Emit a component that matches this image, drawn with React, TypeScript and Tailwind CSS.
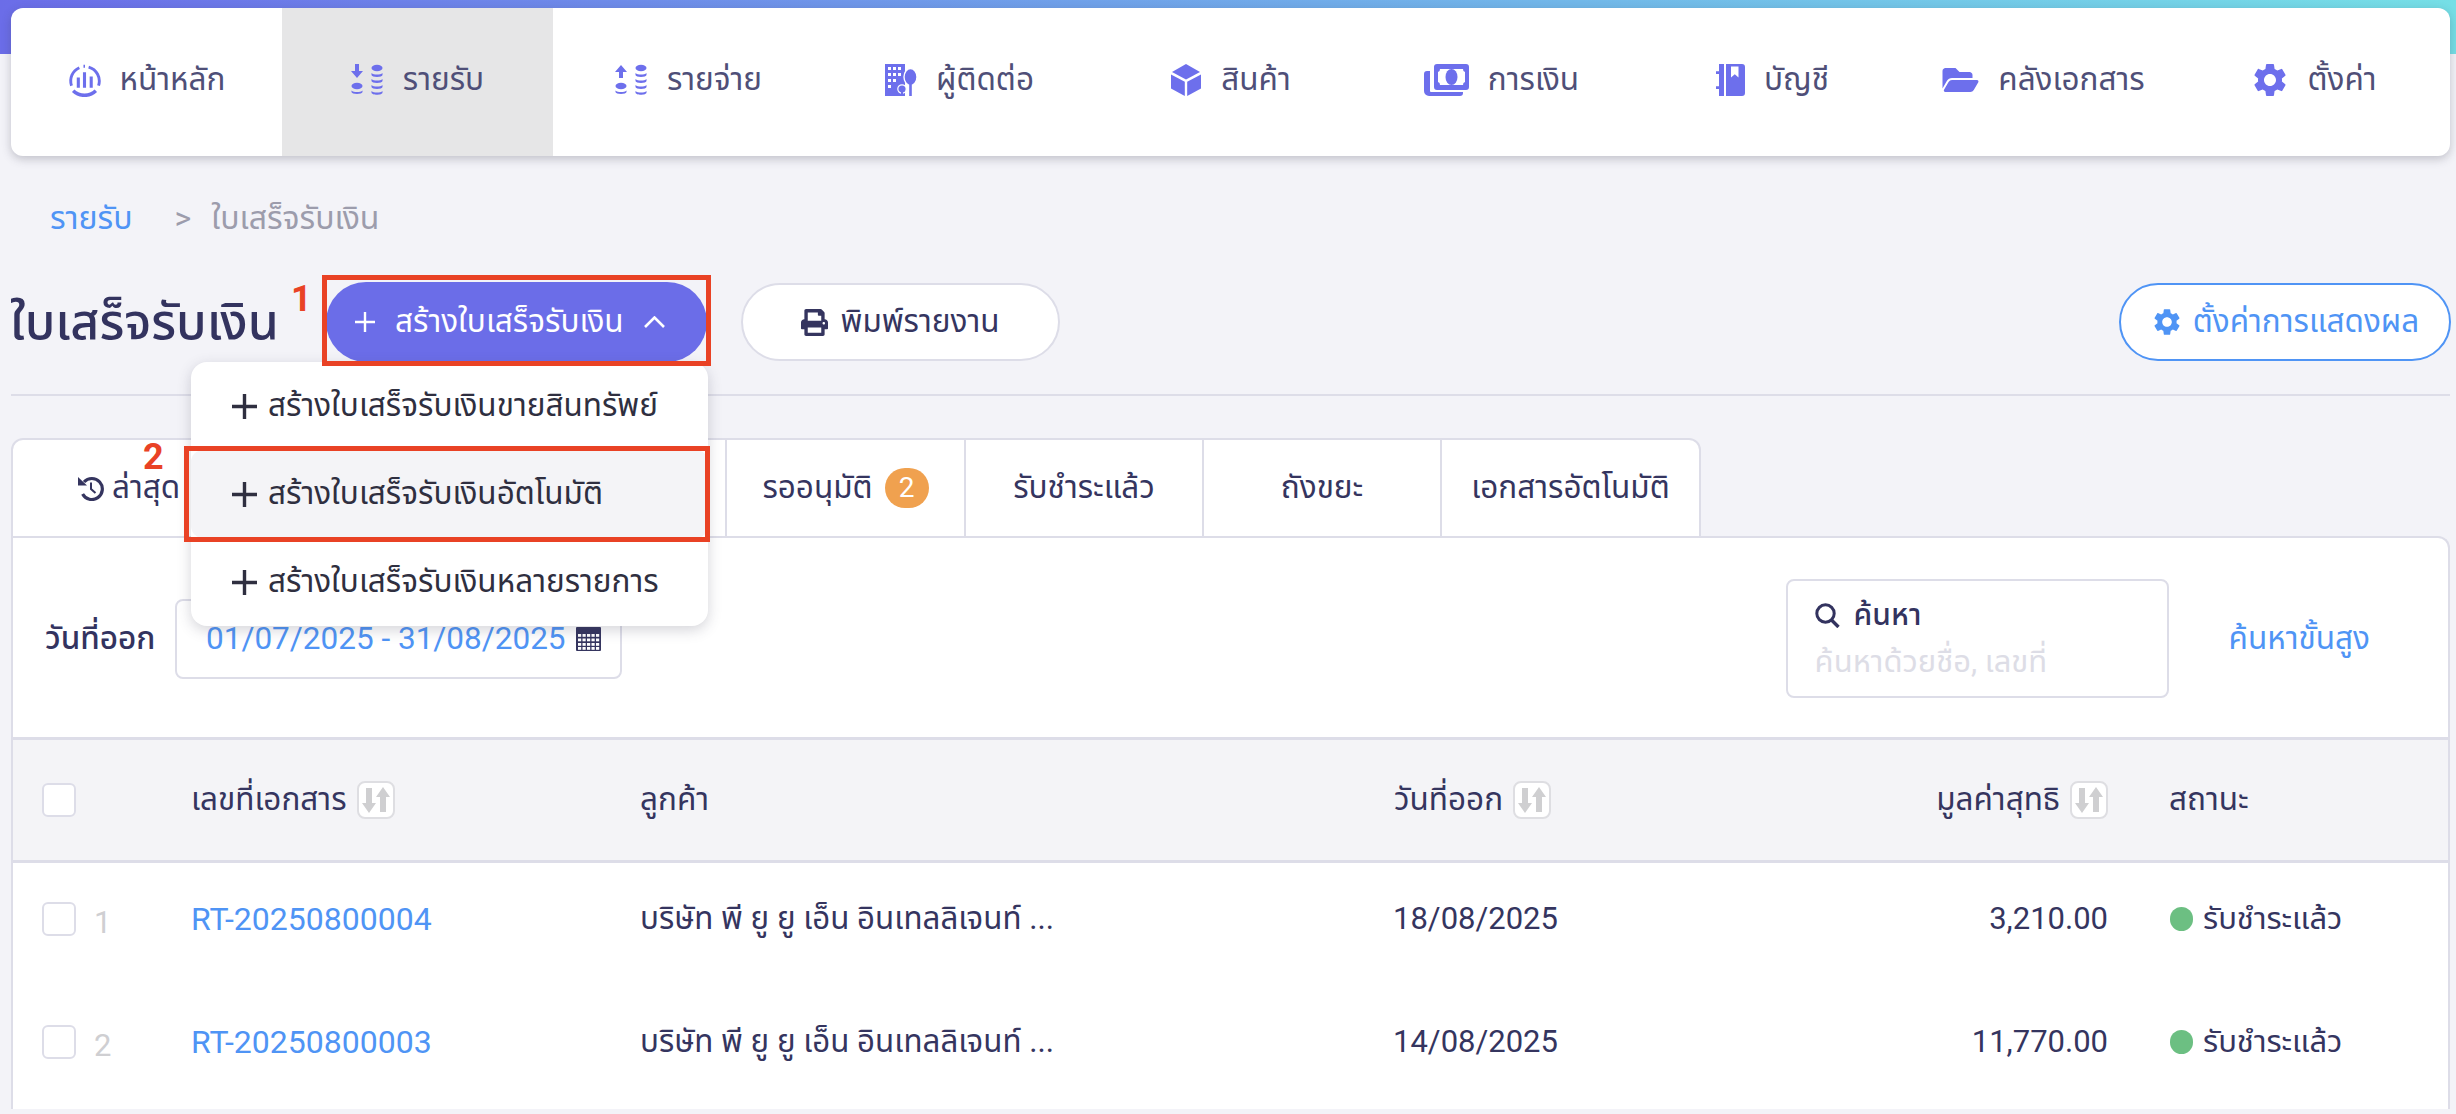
import React from 'react';
import { FaFolderOpen, FaPrint } from 'react-icons/fa';
import { MdSettings } from 'react-icons/md';

const IconHome = () => (
  <svg viewBox="0 0 32 32" className="w-[33px] h-[33px]" fill="none" stroke="#6d6fec">
    <path d="M3.4 21A14 14 0 0 1 11 3.6" strokeWidth="2.8" />
    <path d="M15 2.2h1.5M20 3A14 14 0 0 1 29.6 21" strokeWidth="2.8" />
    <path d="M5 26a16 16 0 0 0 22 0" strokeWidth="3.4" />
    <path d="M10 13v10M16 8v15M22.5 12v11" strokeWidth="3" />
  </svg>
);

const IconCoins = ({ up }: { up?: boolean }) => (
  <svg viewBox="0 0 33 32" className="w-[33px] h-8" fill="#6d6fec">
    {up ? <path d="M6 1l6 7H8v6H4V8H0z" /> : <path d="M4 0h4v7h4l-6 7-6-7h4z" />}
    <ellipse cx="6" cy="22" rx="5.5" ry="3.2" />
    <path d="M.5 26.5c2 2 9 2 11 0v1.5c0 2.5-11 2.5-11 0z" />
    <ellipse cx="26" cy="4" rx="5.5" ry="3.2" />
    <path d="M20.5 9c2 2 9 2 11 0v2c0 2.5-11 2.5-11 0zM20.5 15c2 2 9 2 11 0v2c0 2.5-11 2.5-11 0zM20.5 21c2 2 9 2 11 0v2c0 2.5-11 2.5-11 0zM20.5 27c2 2 9 2 11 0v1.5c0 3-11 3-11 0z" />
  </svg>
);

const IconContact = () => (
  <svg viewBox="0 0 32 32" className="w-8 h-8" fill="#6d6fec">
    <path fillRule="evenodd" d="M0 0h20v32H0zM3 3v3h3V3zm5 0v3h3V3zm5 0v3h3V3zM3 9v3h3V9zm5 0v3h3V9zm5 0v3h3V9zM3 15v3h3v-3zm5 0v3h3v-3zM3 21v3h3v-3z" />
    <ellipse cx="25.5" cy="13" rx="6.5" ry="8.5" stroke="#fff" strokeWidth="1.4" />
    <rect x="24.2" y="18" width="2.6" height="14" />
    <circle cx="17" cy="25" r="4.2" stroke="#fff" strokeWidth="1.2" />
    <rect x="16" y="26" width="2" height="6" />
  </svg>
);

const IconCube = () => (
  <svg viewBox="0 0 32 32" className="w-8 h-8" fill="#6d6fec">
    <path d="M16 0l14 8-14 7.6L2 8z" />
    <path d="M1 10.4l13.8 7.4V32L1 24.5z" />
    <path d="M31 10.4l-13.8 7.4V32L31 24.5z" />
  </svg>
);

const IconMoney = () => (
  <svg viewBox="0 0 45 32" className="w-[45px] h-8" fill="#6d6fec">
    <path fillRule="evenodd" d="M13 0h29a3 3 0 0 1 3 3v20a3 3 0 0 1-3 3H13a3 3 0 0 1-3-3V3a3 3 0 0 1 3-3zm3 5a3 3 0 0 1-2 3v10a3 3 0 0 1 2 3h23a3 3 0 0 1 2-3V8a3 3 0 0 1-2-3z" />
    <ellipse cx="27.5" cy="13" rx="6" ry="8" />
    <path d="M0 10a3 3 0 0 1 3-3h3v20a1 1 0 0 0 1 1h32v1a3 3 0 0 1-3 3H5a5 5 0 0 1-5-5z" />
  </svg>
);

const IconBook = () => (
  <svg viewBox="0 0 29 32" className="w-[29px] h-8" fill="#6d6fec">
    <path fillRule="evenodd" d="M10 0h16a3 3 0 0 1 3 3v26a3 3 0 0 1-3 3H10zm5 2.5v11l3.8-3.2 3.7 3.2v-11z" />
    <path d="M3 0h5v32H3V25H0v-2.8h3V10H0V7.2h3z" />
  </svg>
);

const IconHistory = () => (
  <svg viewBox="0 0 26 26" className="w-[26px] h-[26px] text-[#35355f]" fill="none" stroke="currentColor">
    <path d="M6 7A10.5 10.5 0 1 1 4.6 19" strokeWidth="3.2" />
    <path d="M0 2l9 8.5H0z" fill="currentColor" stroke="none" />
    <path d="M13 7.5V14l4.5 4" strokeWidth="2" />
  </svg>
);

const IconSearch = () => (
  <svg viewBox="0 0 25 25" className="w-[25px] h-[25px]" fill="none" stroke="currentColor">
    <circle cx="10.5" cy="10.5" r="8.7" strokeWidth="3" />
    <path d="M16.5 17l7 7" strokeWidth="3.4" />
  </svg>
);

const IconCalendar = () => (
  <svg viewBox="0 0 25 24" className="w-[25px] h-6 fill-[#35355f]">
    <path d="M1 0h23a1 1 0 0 1 1 1v22a1 1 0 0 1-1 1H1a1 1 0 0 1-1-1V1a1 1 0 0 1 1-1z" />
    {[7, 11.5, 16, 20].flatMap(y =>
      [2, 6.5, 11, 15.5, 20].map(x => <rect key={`${x}-${y}`} x={x} y={y} width="3.2" height="2.8" fill="#fff" />),
    )}
  </svg>
);

const PlusMark = ({ size, stroke }: { size: string; stroke: number }) => (
  <svg viewBox="0 0 25 25" className={size} fill="none" stroke="currentColor" strokeWidth={stroke}>
    <path d="M12.5 0v25M0 12.5h25" />
  </svg>
);

const SortIcon = () => (
  <span className="inline-flex items-center justify-center w-[38px] h-[38px] bg-white border-2 border-[#dedee2] rounded-lg">
    <svg viewBox="0 0 30 30" className="w-[30px] h-[30px]" fill="#cfcfd1">
      <path d="M5 3h6v15h4l-7 10-7-10h4zM19 27h6V12h4L22 2l-7 10h4z" />
    </svg>
  </span>
);

const navItems: [React.ReactNode, string, boolean?][] = [
  [<IconHome />, 'หน้าหลัก'],
  [<IconCoins />, 'รายรับ', true],
  [<IconCoins up />, 'รายจ่าย'],
  [<IconContact />, 'ผู้ติดต่อ'],
  [<IconCube />, 'สินค้า'],
  [<IconMoney />, 'การเงิน'],
  [<IconBook />, 'บัญชี'],
  [<FaFolderOpen className="w-[37px] h-8 text-[#6d6fec]" />, 'คลังเอกสาร'],
  [<MdSettings className="w-10 h-10 -mx-0.5 text-[#6d6fec]" />, 'ตั้งค่า'],
];

const rows = [
  { n: 1, doc: 'RT-20250800004', date: '18/08/2025', net: '3,210.00' },
  { n: 2, doc: 'RT-20250800003', date: '14/08/2025', net: '11,770.00' },
];

const menuItems = ['สร้างใบเสร็จรับเงินขายสินทรัพย์', 'สร้างใบเสร็จรับเงินอัตโนมัติ', 'สร้างใบเสร็จรับเงินหลายรายการ'];

export default function App() {
  return (
    <div className="relative h-[1114px] overflow-hidden bg-[#f3f3f8] text-[#35355f] text-[31.5px] leading-none font-['Roboto','Noto_Sans_Thai','Noto_Sans',sans-serif]">
      <div className="absolute inset-x-0 top-0 h-[54px] bg-gradient-to-r from-[#6b6de8] to-[#75dfe6]" />

      <nav className="relative top-2 ml-[11px] mr-[6px] h-[148px] flex bg-white rounded-xl overflow-hidden shadow-[0_3px_10px_rgba(60,60,80,0.28)]">
        {navItems.map(([icon, label, active]) => (
          <div key={label} className={`w-[271px] flex items-center justify-center gap-[19px] text-[#4f4f78] pb-1 ${active ? 'bg-[#e6e6e7]' : ''}`}>
            {icon}
            <span>{label}</span>
          </div>
        ))}
      </nav>

      <div className="flex items-center h-[40px] mt-[50px] pl-[50px] text-[32px]">
        <span className="text-[#4f94f5]">รายรับ</span>
        <span className="ml-[42px] text-[#9c9cac]">&gt;</span>
        <span className="ml-5 text-[#9c9cac]">ใบเสร็จรับเงิน</span>
      </div>

      <div className="flex items-center h-[78px] mt-[45px] pl-[10px] pr-[5px]">
        <h1 className="w-[316px] text-[50px] font-medium text-[#33335f]">ใบเสร็จรับเงิน</h1>
        <button className="w-[381px] h-[80px] flex items-center pl-[29px] rounded-full bg-[#6b6de8] text-white">
          <PlusMark size="w-5 h-5" stroke={3} />
          <span className="ml-[20px]">สร้างใบเสร็จรับเงิน</span>
          <svg viewBox="0 0 21 12" className="w-[21px] h-3 ml-5" fill="none" stroke="currentColor" strokeWidth="2.6">
            <path d="M1 11l9.5-9.5L20 11" />
          </svg>
        </button>
        <button className="ml-[34px] w-[319px] h-[78px] flex items-center justify-center gap-3 rounded-full bg-white border-2 border-[#dddde8] text-[#35355f]">
          <FaPrint className="w-[27px] h-[27px]" />
          พิมพ์รายงาน
        </button>
        <button className="ml-auto w-[332px] h-[78px] flex items-center justify-center gap-2.5 rounded-full bg-white border-2 border-[#4f94f5] text-[#4f94f5]">
          <MdSettings className="w-8 h-8" />
          ตั้งค่าการแสดงผล
        </button>
      </div>

      <div className="mt-[33px] ml-[11px] mr-[6px] h-[2px] bg-[#dddde8]" />

      <div className="mt-[42px] ml-[11px] flex w-[1690px] h-[100px] bg-white border-2 border-[#dddde8] rounded-t-xl">
        <div className="w-[236px] flex items-center gap-[8px] pl-[65px]">
          <IconHistory />
          ล่าสุด
        </div>
        <div className="w-[238px] border-l-2 border-[#dddde8]" />
        <div className="w-[238px] border-l-2 border-[#dddde8]" />
        <div className="w-[239px] flex items-center justify-center gap-3 border-l-2 border-[#dddde8]">
          รออนุมัติ
          <span className="w-[44px] h-[40px] rounded-full bg-[#f0a14f] text-white text-[28px] flex items-center justify-center">2</span>
        </div>
        <div className="w-[238px] flex items-center justify-center border-l-2 border-[#dddde8]">รับชำระแล้ว</div>
        <div className="w-[238px] flex items-center justify-center border-l-2 border-[#dddde8]">ถังขยะ</div>
        <div className="flex-1 flex items-center justify-center border-l-2 border-[#dddde8]">เอกสารอัตโนมัติ</div>
      </div>

      <section className="-mt-[2px] ml-[11px] mr-[6px] bg-white border-x-2 border-t-2 border-[#dddde8] rounded-tr-xl">
        <div className="h-[199px] flex items-center pl-[32px] pr-[78px] pt-[2px]">
          <span className="w-[130px] font-medium text-[#33335f]">วันที่ออก</span>
          <div className="w-[447px] h-[80px] flex items-center pl-[29px] gap-[10px] border-2 border-[#dddde8] rounded-lg text-[31.5px] text-[#4f94f5]">
            01/07/2025 - 31/08/2025
            <IconCalendar />
          </div>
          <div className="ml-auto w-[383px] h-[119px] flex flex-col justify-center pl-[27px] border-2 border-[#dddde8] rounded-lg">
            <div className="flex items-center gap-[14px] text-[30px] font-medium text-[#33335f]">
              <IconSearch />
              ค้นหา
            </div>
            <span className="mt-[16px] text-[31px] text-[#dddde6]">ค้นหาด้วยชื่อ, เลขที่</span>
          </div>
          <span className="ml-[60px] text-[#4f94f5]">ค้นหาขั้นสูง</span>
        </div>

        <div className="grid grid-cols-[178px_449px_754px_406px_308px_1fr] items-center h-[126px] bg-[#f4f4f7] border-y-[3px] border-[#dddde8]">
          <div className="pl-[29px]">
            <span className="block w-[34px] h-[34px] bg-white border-2 border-[#dddde8] rounded-md" />
          </div>
          <div className="flex items-center gap-[10px]">เลขที่เอกสาร <SortIcon /></div>
          <div>ลูกค้า</div>
          <div className="flex items-center gap-[10px]">วันที่ออก <SortIcon /></div>
          <div className="flex items-center justify-end gap-[10px]">มูลค่าสุทธิ <SortIcon /></div>
          <div className="pl-[61px]">สถานะ</div>
        </div>

        {rows.map(r => (
          <div key={r.n} className="grid grid-cols-[178px_449px_753px_407px_308px_1fr] items-center h-[123px] pb-[12px] text-[31px]">
            <div className="pl-[29px] flex items-center gap-[18px] text-[#cfcfd2]">
              <span className="block w-[34px] h-[34px] bg-white border-2 border-[#dddde8] rounded-md" />
              <span className="pt-2">{r.n}</span>
            </div>
            <div className="text-[32px] text-[#4f94f5]">{r.doc}</div>
            <div className="text-[31.3px]">บริษัท พี ยู ยู เอ็น อินเทลลิเจนท์ ...</div>
            <div>{r.date}</div>
            <div className="text-right">{r.net}</div>
            <div className="pl-[62px] flex items-center gap-[10px]">
              <span className="w-[23px] h-[24px] rounded-full bg-[#6cbf82]" />
              รับชำระแล้ว
            </div>
          </div>
        ))}
      </section>

      {/* dropdown and the red marks lie over the page */}
      <div className="absolute left-[191px] top-[362px] w-[517px] h-[264px] bg-white rounded-2xl shadow-[0_4px_14px_rgba(60,60,80,0.22)] flex flex-col text-[#2f2f40]">
        {menuItems.map((m, i) => (
          <div key={m} className={`h-[88px] flex items-center pl-[41px] gap-[11px] rounded-xl ${i === 1 ? 'bg-[#f4f4f7]' : ''}`}>
            <PlusMark size="w-[25px] h-[25px]" stroke={3.4} />
            {m}
          </div>
        ))}
      </div>
      <div className="absolute left-[322px] top-[275px] w-[389px] h-[91px] border-[5px] border-[#e94225]" />
      <div className="absolute left-[184px] top-[446px] w-[526px] h-[96px] border-[5px] border-[#e94225]" />
      <span className="absolute left-[291px] top-[281px] text-[36px] font-bold text-[#e94225]">1</span>
      <span className="absolute left-[143px] top-[439px] text-[36px] font-bold text-[#e94225]">2</span>
    </div>
  );
}
